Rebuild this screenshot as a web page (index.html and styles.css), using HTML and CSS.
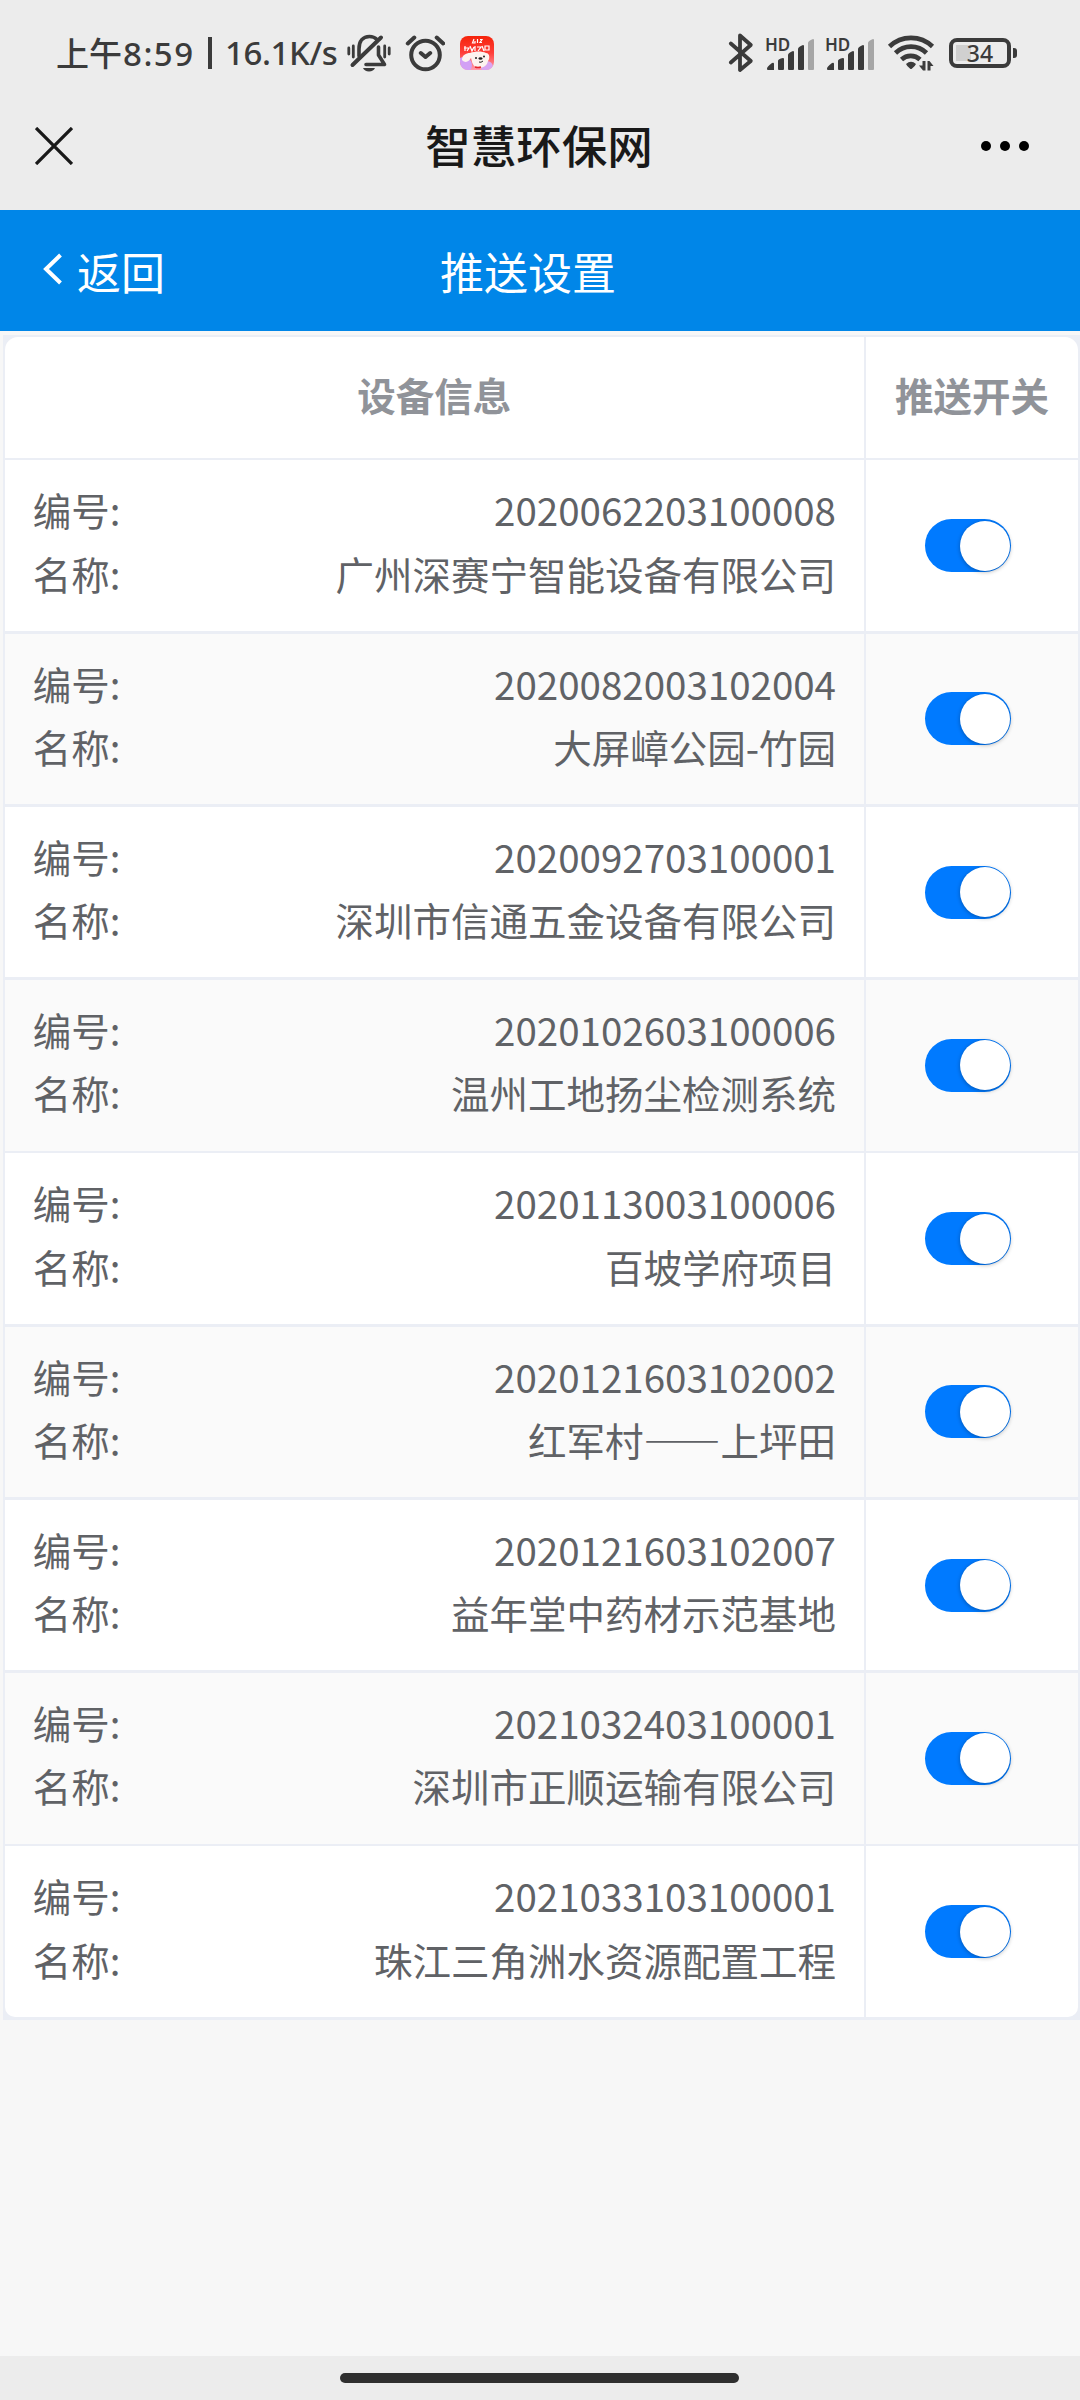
FILE: index.html
```html
<!DOCTYPE html>
<html lang="zh-CN">

<head>
    <meta charset="utf-8">
    <title>推送设置</title>
    <link rel="stylesheet" href="styles.css">
</head>

<body>
    <div class="status-bar">
        <span class="clock">上午<b>8:59</b></span>
        <i class="divider"></i>
        <span class="speed">16.1K/s</span>
        <svg class="icon-mute" width="46" height="40" viewBox="346 33 46 40" fill="none" stroke="#3b3b3b" stroke-width="3.6" stroke-linecap="round">
            <path d="M348.8 48v6M353.3 46v11M384.7 46v11M389.2 48v6" stroke-width="2.8" />
            <path d="M359 56v-7c0-8 4-12.500 10.500-12.500 3 0 5.500 1 7.500 3" />
            <path d="M381 37.500L352.500 65" stroke-width="4" />
            <path d="M378.500 47v8l6 9.500H366" stroke-linejoin="round" />
            <path d="M363 68h12c-1 2-3 3.500-6 3.500s-5-1.500-6-3.500z" fill="#3b3b3b" stroke="none" />
        </svg>
        <svg class="icon-alarm" width="40" height="38" viewBox="405 33 40 38" fill="none" stroke="#3b3b3b" stroke-width="4" stroke-linecap="round" stroke-linejoin="round">
            <circle cx="425.500" cy="54" r="14.300" />
            <path d="M407.800 42.500l6.500-6M443.200 42.500l-6.500-6M420.800 52l4.700 4 4.700-4" />
        </svg>
        <svg class="icon-app" width="34" height="34" viewBox="0 0 34 34">
            <defs>
                <linearGradient id="app-bg" x1="0" y1="0" x2="0" y2="1">
                    <stop offset="0" stop-color="#f5230a" />
                    <stop offset=".5" stop-color="#ff3f3a" />
                    <stop offset="1" stop-color="#ff9fb0" />
                </linearGradient>
                <clipPath id="app-clip"><rect width="34" height="34" rx="8" /></clipPath>
            </defs>
            <g clip-path="url(#app-clip)">
                <rect width="34" height="34" fill="url(#app-bg)" />
                <circle cx="4" cy="29" r="8" fill="#d2a0f5" />
                <circle cx="27" cy="31" r="6" fill="#d9a6f2" />
                <path d="M14 3l-1.500 4h2.500v-2M17.500 3v4M20 3.500h2l-2 3h2M5 10v5M4 12h5l-2 3M10 10l2 5 2-4M15 10v5M17 11h4l-3 4M22 10l2 5M25 10h4v4h-4z" fill="none" stroke="#fff" stroke-width="1.200" />
                <path d="M2 24c0-5 4-7 8-7 5-2 12-2 16 0 4 0 4 6 2 8-1 6-7 8-12 6-4-2-4-6-5-9-2 3-5 6-9 2z" fill="#fdf3ef" />
                <circle cx="16" cy="22" r="1" fill="#222" />
                <ellipse cx="20.500" cy="22.500" rx="2" ry="1.300" fill="#222" />
                <circle cx="24" cy="20.500" r="1" fill="#222" />
                <path d="M19 26q2 1 4-1" fill="none" stroke="#222" />
                <path d="M15 31q3 1 6 0" stroke="#e5252a" stroke-width="1.500" fill="none" />
            </g>
        </svg>
        <svg class="icon-bt" width="26" height="40" viewBox="728 32 26 40" fill="none" stroke="#3b3b3b" stroke-width="3.800" stroke-linecap="round" stroke-linejoin="round">
            <path d="M730.800 42.500l20 17.500-10.800 9V34.500l10.800 9.500-20 17.500" />
        </svg>
        <div class="signal">
            <span>HD</span>
            <svg width="49" height="32" viewBox="0 0 49 32" fill="#3b3b3b">
                <path d="M2 30.500q0-2 5-5.500 2-1 2 1v6H3q-1 0-1-1zM13 23q0-2 5-3 1 0 1 1v10q0 1-1 1h-4q-1 0-1-1zM23 17q0-2 5-4 1 0 1 1v17q0 1-1 1h-4q-1 0-1-1zM33 11q0-2 5-4 1 0 1 1v23q0 1-1 1h-4q-1 0-1-1z" />
                <path d="M43 5q0-2 5-4 1 0 1 1v29q0 1-1 1h-4q-1 0-1-1z" fill="#a6a6a6" />
            </svg>
        </div>
        <div class="signal">
            <span>HD</span>
            <svg width="49" height="32" viewBox="0 0 49 32" fill="#3b3b3b">
                <path d="M2 30.500q0-2 5-5.500 2-1 2 1v6H3q-1 0-1-1zM13 23q0-2 5-3 1 0 1 1v10q0 1-1 1h-4q-1 0-1-1zM23 17q0-2 5-4 1 0 1 1v17q0 1-1 1h-4q-1 0-1-1zM33 11q0-2 5-4 1 0 1 1v23q0 1-1 1h-4q-1 0-1-1z" />
                <path d="M43 5q0-2 5-4 1 0 1 1v29q0 1-1 1h-4q-1 0-1-1z" fill="#a6a6a6" />
            </svg>
        </div>
        <svg class="icon-wifi" width="48" height="38" viewBox="887 34 48 38" fill="none" stroke="#3b3b3b" stroke-width="4.600">
            <path d="M889.500 46.500a31 31 0 0 1 43 0M895.500 53a22 22 0 0 1 31 0M901.500 59.500a13.500 13.500 0 0 1 18.500 0" />
            <path d="M906 64q5-4.500 10 0-1 2.500-4.200 4.700-.8.600-1.600 0-3.200-2.200-4.200-4.700z" fill="#3b3b3b" stroke="none" />
            <path d="M922.500 61h3v9.500h-2.500l-4-5h3.500zM927.500 70.500V61h2l4 5h-3v4.500z" fill="#3b3b3b" stroke="none" />
        </svg>
        <div class="battery"><span>34</span></div>
    </div>

    <div class="nav-bar">
        <svg class="close" width="38" height="38" viewBox="0 0 38 38" fill="none" stroke="#191919" stroke-width="3.300">
            <path d="M1 1l36 36M37 1L1 37" />
        </svg>
        <h1>智慧环保网</h1>
        <div class="more"><i></i><i></i><i></i></div>
    </div>

    <div class="header">
        <a class="back">
            <svg width="20" height="32" viewBox="0 0 20 32" fill="none" stroke="#fff" stroke-width="4">
                <path d="M17.500 2L3 16l14.500 14" />
            </svg>
            <span>返回</span>
        </a>
        <h2>推送设置</h2>
    </div>

    <div class="table">
        <div class="th">设备信息</div>
        <div class="th">推送开关</div>

        <div class="td">
            <p><label>编号:</label><span>2020062203100008</span></p>
            <p><label>名称:</label><span>广州深赛宁智能设备有限公司</span></p>
        </div>
        <div class="td action"><i class="switch"></i></div>

        <div class="td striped">
            <p><label>编号:</label><span>2020082003102004</span></p>
            <p><label>名称:</label><span>大屏嶂公园-竹园</span></p>
        </div>
        <div class="td action striped"><i class="switch"></i></div>

        <div class="td">
            <p><label>编号:</label><span>2020092703100001</span></p>
            <p><label>名称:</label><span>深圳市信通五金设备有限公司</span></p>
        </div>
        <div class="td action"><i class="switch"></i></div>

        <div class="td striped">
            <p><label>编号:</label><span>2020102603100006</span></p>
            <p><label>名称:</label><span>温州工地扬尘检测系统</span></p>
        </div>
        <div class="td action striped"><i class="switch"></i></div>

        <div class="td">
            <p><label>编号:</label><span>2020113003100006</span></p>
            <p><label>名称:</label><span>百坡学府项目</span></p>
        </div>
        <div class="td action"><i class="switch"></i></div>

        <div class="td striped">
            <p><label>编号:</label><span>2020121603102002</span></p>
            <p><label>名称:</label><span>红军村——上坪田</span></p>
        </div>
        <div class="td action striped"><i class="switch"></i></div>

        <div class="td">
            <p><label>编号:</label><span>2020121603102007</span></p>
            <p><label>名称:</label><span>益年堂中药材示范基地</span></p>
        </div>
        <div class="td action"><i class="switch"></i></div>

        <div class="td striped">
            <p><label>编号:</label><span>2021032403100001</span></p>
            <p><label>名称:</label><span>深圳市正顺运输有限公司</span></p>
        </div>
        <div class="td action striped"><i class="switch"></i></div>

        <div class="td">
            <p><label>编号:</label><span>2021033103100001</span></p>
            <p><label>名称:</label><span>珠江三角洲水资源配置工程</span></p>
        </div>
        <div class="td action"><i class="switch"></i></div>
    </div>

    <div class="home-bar"><i></i></div>
</body>

</html>
```
FILE: styles.css
```css
* {
    box-sizing: border-box;
}

body {
    display: flex;
    flex-direction: column;
    height: 2400px;
    margin: 0;
    background: #f7f7f7;
    font-family: "Noto Sans CJK SC", sans-serif;
}

h1,
h2,
p {
    margin: 0;
    font-weight: normal;
}

svg {
    display: block;
    flex: none;
}

/* 系统状态栏 */
.status-bar {
    display: flex;
    align-items: center;
    height: 105px;
    padding: 0 69px 0 56px;
    background: #ececec;
    color: #3b3b3b;
    font-size: 33px;
    font-weight: 500;
    line-height: 48px;
    white-space: nowrap;
}

.status-bar .clock {
    width: 140px;
}

.status-bar .clock b,
.status-bar .speed {
    font-family: "Noto Sans", sans-serif;
    font-weight: 500;
}

.status-bar .clock b {
    margin-left: 1px;
    letter-spacing: 1.500px;
}

.status-bar .divider {
    width: 4px;
    height: 32px;
    margin: 0 13px 0 12px;
    background: #3b3b3b;
}

.status-bar .speed {
    width: 121px;
    letter-spacing: -.400px;
}

.icon-app {
    margin: 0 auto 0 15px;
}

.icon-alarm {
    margin-left: 13px;
}

.signal {
    display: flex;
    align-items: flex-end;
    width: 49px;
    height: 34px;
    margin-left: 11px;
}

.signal span {
    width: 0;
    align-self: flex-start;
    font: 600 17px/17px "Noto Sans", sans-serif;
}

.icon-wifi {
    margin-left: 13px;
}

.battery {
    position: relative;
    width: 62px;
    height: 30px;
    margin-left: 14px;
    border: 4px solid #3b3b3b;
    border-radius: 8px;
    background: linear-gradient(#d0d0d0, #d0d0d0) 3px 3px / 15px 16px no-repeat;
    font: 500 23px/22px "Noto Sans", sans-serif;
    text-align: center;
}

.battery::after {
    content: "";
    position: absolute;
    top: 6px;
    right: -10px;
    width: 4px;
    height: 10px;
    border-radius: 0 3px 3px 0;
    background: #3b3b3b;
}

/* 微信标题栏 */
.nav-bar {
    display: grid;
    grid-template-columns: 1fr auto 1fr;
    align-items: center;
    height: 105px;
    padding: 0 51px 24px 35px;
    background: #ececec;
}

.nav-bar h1 {
    margin: -3px -7px 0 7px;
    color: #191919;
    font-size: 45.500px;
    font-weight: 500;
    line-height: 66px;
}

.more {
    display: flex;
    justify-content: flex-end;
    gap: 9px;
}

.more i {
    width: 10px;
    height: 10px;
    border-radius: 50%;
    background: #000;
}

/* 页面头部 */
.header {
    display: grid;
    grid-template-columns: 440px auto;
    align-items: center;
    height: 121px;
    background: #0086e8;
    color: #fff;
    font-size: 44px;
    line-height: 64px;
}

.header h2 {
    font-size: 44px;
}

.back {
    display: flex;
    align-items: center;
    gap: 14px;
    padding-left: 43px;
}

.back svg {
    margin-bottom: 4px;
}

/* 设备表格 */
.table {
    display: grid;
    grid-template-columns: 858.250px 1fr;
    grid-template-rows: 120.250px repeat(9, 170.500px);
    gap: 2.750px;
    margin-top: 3.500px;
    margin-left: 2.500px;
    padding: 2.750px 2px 2.750px 2.750px;
    background: #ebeef5;
    color: #606266;
    font-size: 38.500px;
    line-height: 63.250px;
}

.th {
    display: flex;
    align-items: center;
    justify-content: center;
    padding-bottom: 6px;
    background: #fff;
    color: #909399;
    font-weight: 700;
}

.th:first-child {
    border-top-left-radius: 13px;
}

.th:nth-child(2) {
    border-top-right-radius: 13px;
}

.td {
    padding: 18px 27.500px;
    background: #fff;
}

.td:nth-last-child(2) {
    border-bottom-left-radius: 10px;
}

.td:last-child {
    border-bottom-right-radius: 10px;
}

.td.striped {
    background: #fafafa;
}

.td p {
    display: flex;
    justify-content: space-between;
}

.td.action {
    display: flex;
    align-items: center;
    justify-content: center;
    padding: 0 8px 0 0;
}

.switch {
    width: 86px;
    height: 53px;
    padding: 1.500px;
    border-radius: 27px;
    background: #007aff;
}

.switch::after {
    content: "";
    display: block;
    width: 50px;
    height: 50px;
    margin-left: auto;
    border-radius: 50%;
    background: #fff;
    box-shadow: 0 1px 4px rgba(0, 0, 0, .3);
}

/* 底部手势条 */
.home-bar {
    height: 44px;
    margin-top: auto;
    padding: 17px 0 0 340px;
    background: #ececec;
}

.home-bar i {
    display: block;
    width: 399px;
    height: 10px;
    border-radius: 5px;
    background: #2f2f2f;
}
```
